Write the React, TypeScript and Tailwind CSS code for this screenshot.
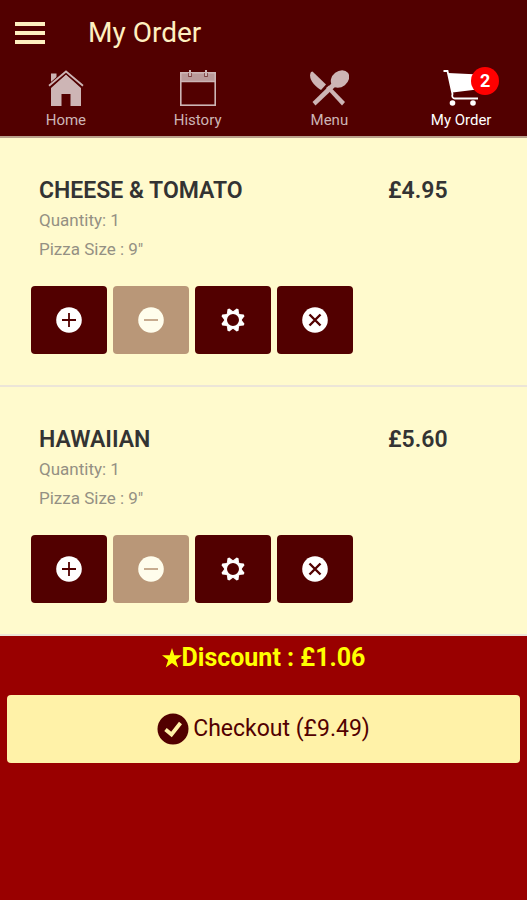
import type { ReactNode } from "react";

function HomeIcon() {
  return (
    <svg viewBox="0 0 36 36" className="h-9 w-9" fill="currentColor" aria-hidden="true">
      <path d="M3 3.500H8.500V8.500L3 13.500Z" />
      <path d="M18 4.500 33 18V36H22.500V24H13.500V36H3V18Z" />
      <path d="M1 16.200 18 1.500 35 16.200" fill="none" stroke="#520000" strokeWidth="4" />
      <path d="M1 15.800 18 1.500 35 15.800" fill="none" stroke="currentColor" strokeWidth="1.800" />
    </svg>
  );
}

function CalendarIcon() {
  return (
    <svg viewBox="0 0 36 36" className="h-9 w-9" aria-hidden="true">
      <rect x="0.500" y="2.500" width="35" height="9" fill="currentColor" opacity="0.850" />
      <rect x="0.800" y="2.800" width="34.400" height="32.400" fill="none" stroke="currentColor" strokeWidth="1.600" />
      <path d="M1 11.500H35" stroke="currentColor" strokeWidth="1.500" />
      <path d="M10 3V7M26 3V7" stroke="#520000" strokeWidth="3.600" opacity="0.600" />
      <path d="M10 0V6M26 0V6" stroke="currentColor" strokeWidth="2" />
    </svg>
  );
}

function CutleryIcon() {
  return (
    <svg viewBox="0 0 40 36" className="h-9 w-10" fill="currentColor" aria-hidden="true">
      <path d="M3.500 1.500 17 14.500 12 20C5.500 16-1.500 8.500 2 2Z" />
      <path d="M17 18 20 15.500 36 32 33 35.500Z" />
      <ellipse cx="31" cy="9" rx="10" ry="7.800" transform="rotate(-38 31 9)" />
      <path d="M23 13 26.500 16.500 6.500 35.500 3.500 32Z" />
    </svg>
  );
}

function CartIcon() {
  return (
    <svg viewBox="0 0 36 36" className="h-9 w-9" fill="currentColor" aria-hidden="true">
      <path d="M5 3 36 4.500 34 19.500 9.500 22.500Z" />
      <path
        d="M0.500 1H4.500L9.500 24C8.500 27 10 28.500 12 28.500H35"
        fill="none"
        stroke="currentColor"
        strokeWidth="1.800"
      />
      <circle cx="9.500" cy="33" r="2.800" />
      <circle cx="30" cy="33" r="2.800" />
    </svg>
  );
}

function PlusIcon() {
  return (
    <svg viewBox="0 0 26 26" className="h-[26px] w-[26px]" aria-hidden="true">
      <circle cx="13" cy="13" r="12.800" fill="#fff" />
      <path d="M6 13H20M13 6V20" stroke="#520000" strokeWidth="1.800" />
    </svg>
  );
}

function MinusIcon() {
  return (
    <svg viewBox="0 0 26 26" className="h-[26px] w-[26px]" aria-hidden="true">
      <circle cx="13" cy="13" r="12.800" fill="#fffdec" />
      <path d="M6 13H20" stroke="#b99778" strokeWidth="1.600" />
    </svg>
  );
}

function GearIcon() {
  return (
    <svg viewBox="-13 -13 26 26" className="h-[26px] w-[26px]" aria-hidden="true">
      <circle r="7.500" fill="none" stroke="#fff" strokeWidth="3" />
      <g fill="#fff">
        {[22.5, 67.5, 112.5, 157.5, 202.5, 247.5, 292.5, 337.5].map((angle) => (
          <path key={angle} d="M-3.300-8 -1-12H1L3.300-8Z" transform={`rotate(${angle})`} />
        ))}
      </g>
    </svg>
  );
}

function CloseIcon() {
  return (
    <svg viewBox="0 0 26 26" className="h-[26px] w-[26px]" aria-hidden="true">
      <circle cx="13" cy="13" r="12.800" fill="#fff" />
      <path d="M7.500 7.500 18.500 18.500M18.500 7.500 7.500 18.500" stroke="#520000" strokeWidth="2.400" />
    </svg>
  );
}

function CheckIcon() {
  return (
    <svg viewBox="0 0 32 32" className="h-8 w-8" aria-hidden="true">
      <circle cx="16" cy="16" r="15.500" fill="#520000" />
      <path d="M8.500 16.500 14.500 21.500 23.500 10" fill="none" stroke="#fff2a8" strokeWidth="3.800" />
    </svg>
  );
}

function StarIcon() {
  return (
    <svg viewBox="0 0 20 20" className="h-5 w-5" fill="currentColor" aria-hidden="true">
      <path d="M10 0 12.300 7.300H20L13.800 11.900 16.200 19.500 10 14.900 3.800 19.500 6.200 11.900 0 7.300H7.700Z" />
    </svg>
  );
}

function Tab({ label, icon, active, badge }: { label: string; icon: ReactNode; active?: boolean; badge?: number }) {
  return (
    <a
      href="#"
      aria-current={active ? "page" : undefined}
      className={`flex flex-1 flex-col items-center pt-1.5 ${active ? "text-white" : "text-[#cdb5b5]"}`}
    >
      <span className="relative">
        {icon}
        {badge !== undefined && (
          <span className="absolute -top-[3px] left-7 flex h-7 w-7 items-center justify-center rounded-full bg-[#ff0000] text-lg font-bold text-white">
            {badge}
          </span>
        )}
      </span>
      <span className="mt-1 text-[15px] leading-5">{label}</span>
    </a>
  );
}

function ActionButton({ label, disabled, children }: { label: string; disabled?: boolean; children: ReactNode }) {
  return (
    <button
      type="button"
      aria-label={label}
      disabled={disabled}
      className={`flex h-[68px] w-[76px] items-center justify-center rounded ${disabled ? "bg-[#b99778]" : "bg-[#520000]"}`}
    >
      {children}
    </button>
  );
}

function OrderItem({ name, price, quantity, size }: { name: string; price: string; quantity: number; size: string }) {
  return (
    <li className="border-b-2 border-[#ece5d8] px-[31px] pt-[39px] pb-[31px]">
      <div className="flex px-2 text-[23px] leading-7 font-semibold text-[#333]">
        <h2 className="flex-1">{name}</h2>
        <p className="w-[100px]">{price}</p>
      </div>
      <div className="mt-px px-2 text-[17px] leading-[29px] text-[#949083]">
        <p>Quantity: {quantity}</p>
        <p>Pizza Size : {size}</p>
      </div>
      <div className="mt-[22px] flex gap-1.5">
        <ActionButton label="Add one"><PlusIcon /></ActionButton>
        <ActionButton label="Remove one" disabled><MinusIcon /></ActionButton>
        <ActionButton label="Options"><GearIcon /></ActionButton>
        <ActionButton label="Delete"><CloseIcon /></ActionButton>
      </div>
    </li>
  );
}

const items = [
  { name: "CHEESE & TOMATO", price: "£4.95", quantity: 1, size: '9"' },
  { name: "HAWAIIAN", price: "£5.60", quantity: 1, size: '9"' },
];

export default function App() {
  return (
    <div className="min-h-screen bg-[#990000] font-[Roboto,sans-serif]">
      <header className="border-b-2 border-[#b9a08c] bg-[#520000]">
        <div className="flex h-16 items-center px-[15px] pt-0.5">
          <button type="button" aria-label="Open menu" className="flex w-[30px] flex-col gap-[5px]">
            <span className="h-1 bg-[#fff0c0]" />
            <span className="h-1 bg-[#fff0c0]" />
            <span className="h-1 bg-[#fff0c0]" />
          </button>
          <h1 className="ml-[43px] text-[28px] leading-8 text-[#fff0c0]">My Order</h1>
        </div>
        <nav className="flex h-[72px]">
          <Tab label="Home" icon={<HomeIcon />} />
          <Tab label="History" icon={<CalendarIcon />} />
          <Tab label="Menu" icon={<CutleryIcon />} />
          <Tab label="My Order" icon={<CartIcon />} active badge={2} />
        </nav>
      </header>
      <main>
        <ul className="bg-[#fffacd]">
          {items.map((item) => (
            <OrderItem key={item.name} {...item} />
          ))}
        </ul>
        <p className="flex items-center justify-center pt-1.5 text-[25px] leading-8 font-bold text-[#ffff00]">
          <StarIcon />
          Discount : £1.06
        </p>
        <div className="px-[7px] pt-[21px]">
          <button
            type="button"
            className="flex h-[68px] w-full items-center justify-center gap-1 rounded bg-[#fff2a8] text-[23px] text-[#520000]"
          >
            <CheckIcon />
            Checkout (£9.49)
          </button>
        </div>
      </main>
    </div>
  );
}
